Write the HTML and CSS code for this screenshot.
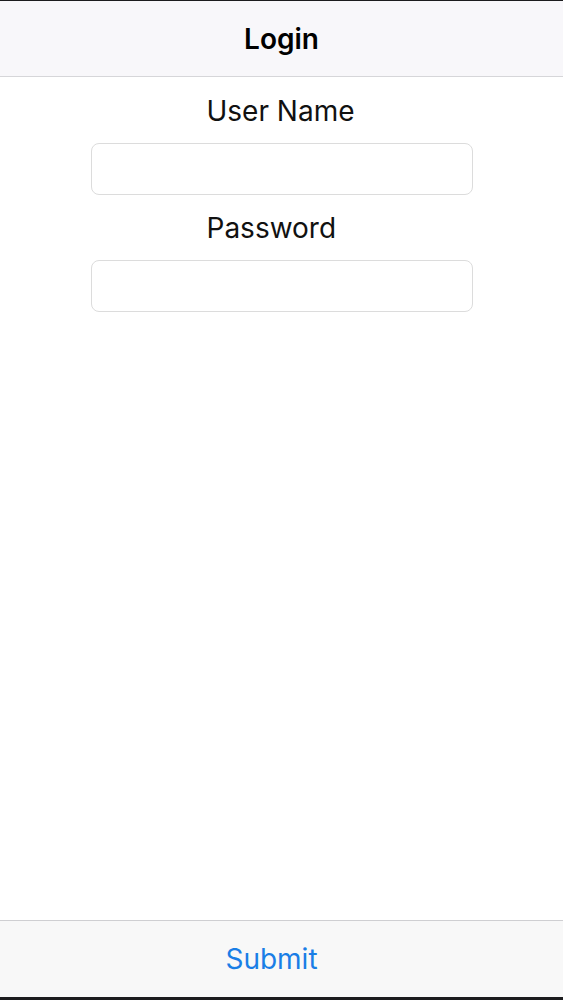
FILE: index.html
```html
<!DOCTYPE html>
<html lang="en">

<head>
    <meta charset="UTF-8">
    <meta name="viewport" content="width=device-width, initial-scale=1.0">
    <title>Login</title>
    <link rel="stylesheet" href="styles.css">
</head>

<body>
    <div class="screen">
        <header class="navbar">
            <h1>Login</h1>
        </header>

        <main class="content">
            <form class="login-form">
                <label for="username">User Name</label>
                <input type="text" id="username">

                <label for="password">Password</label>
                <input type="password" id="password">
            </form>
        </main>

        <footer class="toolbar">
            <button type="button">Submit</button>
        </footer>
    </div>
</body>

</html>
```

FILE: styles.css
```css
body {
    font-family: Inter, "Liberation Sans", sans-serif;
    margin: 0;
    padding: 0;
    background-color: #1c1c1e;
}

.screen {
    height: 1000px;
    display: flex;
    flex-direction: column;
    border-top: 1px solid #1c1c1e;
    border-bottom: 3px solid #1c1c1e;
    box-sizing: border-box;
    background-color: #fff;
}

.navbar {
    height: 75px;
    background-color: #f8f7fa;
    border-bottom: 1px solid #d6d6d9;
    display: flex;
    align-items: center;
    justify-content: center;
}

.navbar h1 {
    margin: 0;
    font-size: 28px;
    font-weight: 600;
    color: #000;
}

.content {
    flex: 1;
    background-color: #fff;
}

.login-form {
    width: 382px;
    margin: 0 auto;
    padding-top: 17px;
    display: flex;
    flex-direction: column;
}

.login-form label {
    padding-left: 116px;
    font-size: 28px;
    color: #111;
    line-height: 34px;
    margin-bottom: 15px;
}

.login-form input {
    height: 52px;
    border: 1px solid #dcdcdc;
    border-radius: 8px;
    margin-bottom: 16px;
    box-sizing: border-box;
    background: #fff;
}

.toolbar {
    height: 76px;
    background-color: #f8f8f8;
    border-top: 1px solid #cfcfd2;
    display: flex;
    align-items: center;
    justify-content: center;
}

.toolbar button {
    background: none;
    border: none;
    padding: 0 20px 0 0;
    font-family: inherit;
    font-size: 28px;
    color: #1a7ee6;
    cursor: pointer;
}
```
